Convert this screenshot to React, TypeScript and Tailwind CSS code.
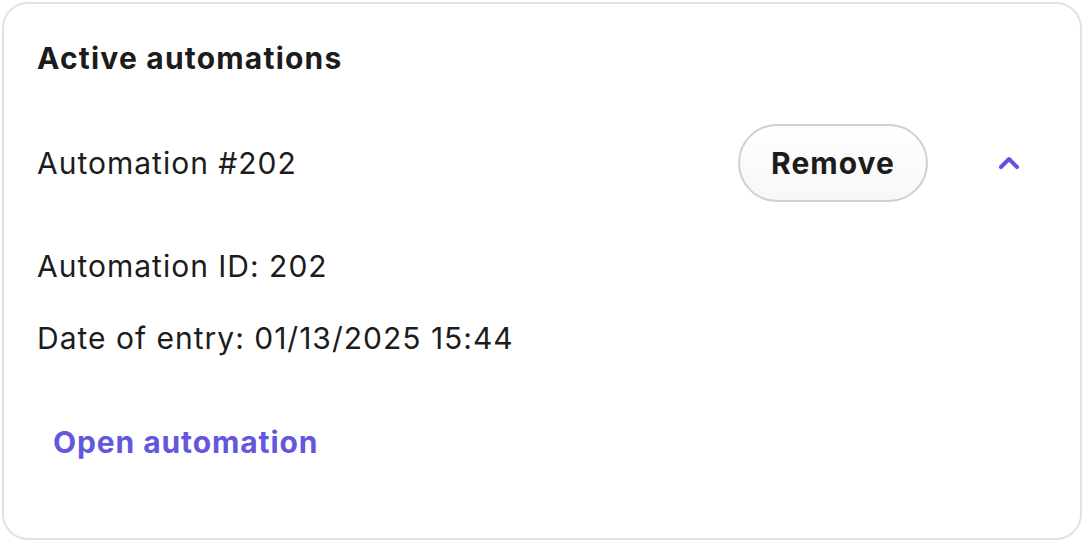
import { ChevronUp } from "lucide-react";

export default function App() {
  return (
    <div className="h-[542px] w-[1084px] bg-white p-[2px] font-['Inter','Noto_Sans',sans-serif] text-[#1c1c1c]">
      <div className="flex h-full flex-col rounded-[26px] border-2 border-[#e2e2e2] px-[33px] pt-[32px]">
        <h2 className="text-[30px] font-bold leading-[44px] tracking-[1.2px]">Active automations</h2>

        {/* Automation header */}
        <div className="mt-[44px] flex items-center">
          <span className="flex-1 text-[30px] leading-[40px] tracking-[1px]">Automation #202</span>
          <button className="h-[78px] w-[190px] rounded-full border-2 border-[#d0d0d0] bg-gradient-to-b from-white to-[#f7f7f7] text-[30px] font-bold tracking-[1px]">
            Remove
          </button>
          <div className="flex w-[119px] justify-end pr-[22px]">
            <ChevronUp className="h-[32px] w-[32px] text-[#5f53e0]" strokeWidth={3} />
          </div>
        </div>

        {/* Details */}
        <div className="mt-[44px] flex flex-col gap-[32px] text-[30px] leading-[40px] tracking-[1px]">
          <span>Automation ID: 202</span>
          <span>Date of entry: 01/13/2025 15:44</span>
        </div>

        <div className="mt-[64px]">
          <button className="px-[16px] text-[30px] font-bold leading-[40px] tracking-[0.9px] text-[#6358dc]">Open automation</button>
        </div>
      </div>
    </div>
  );
}
